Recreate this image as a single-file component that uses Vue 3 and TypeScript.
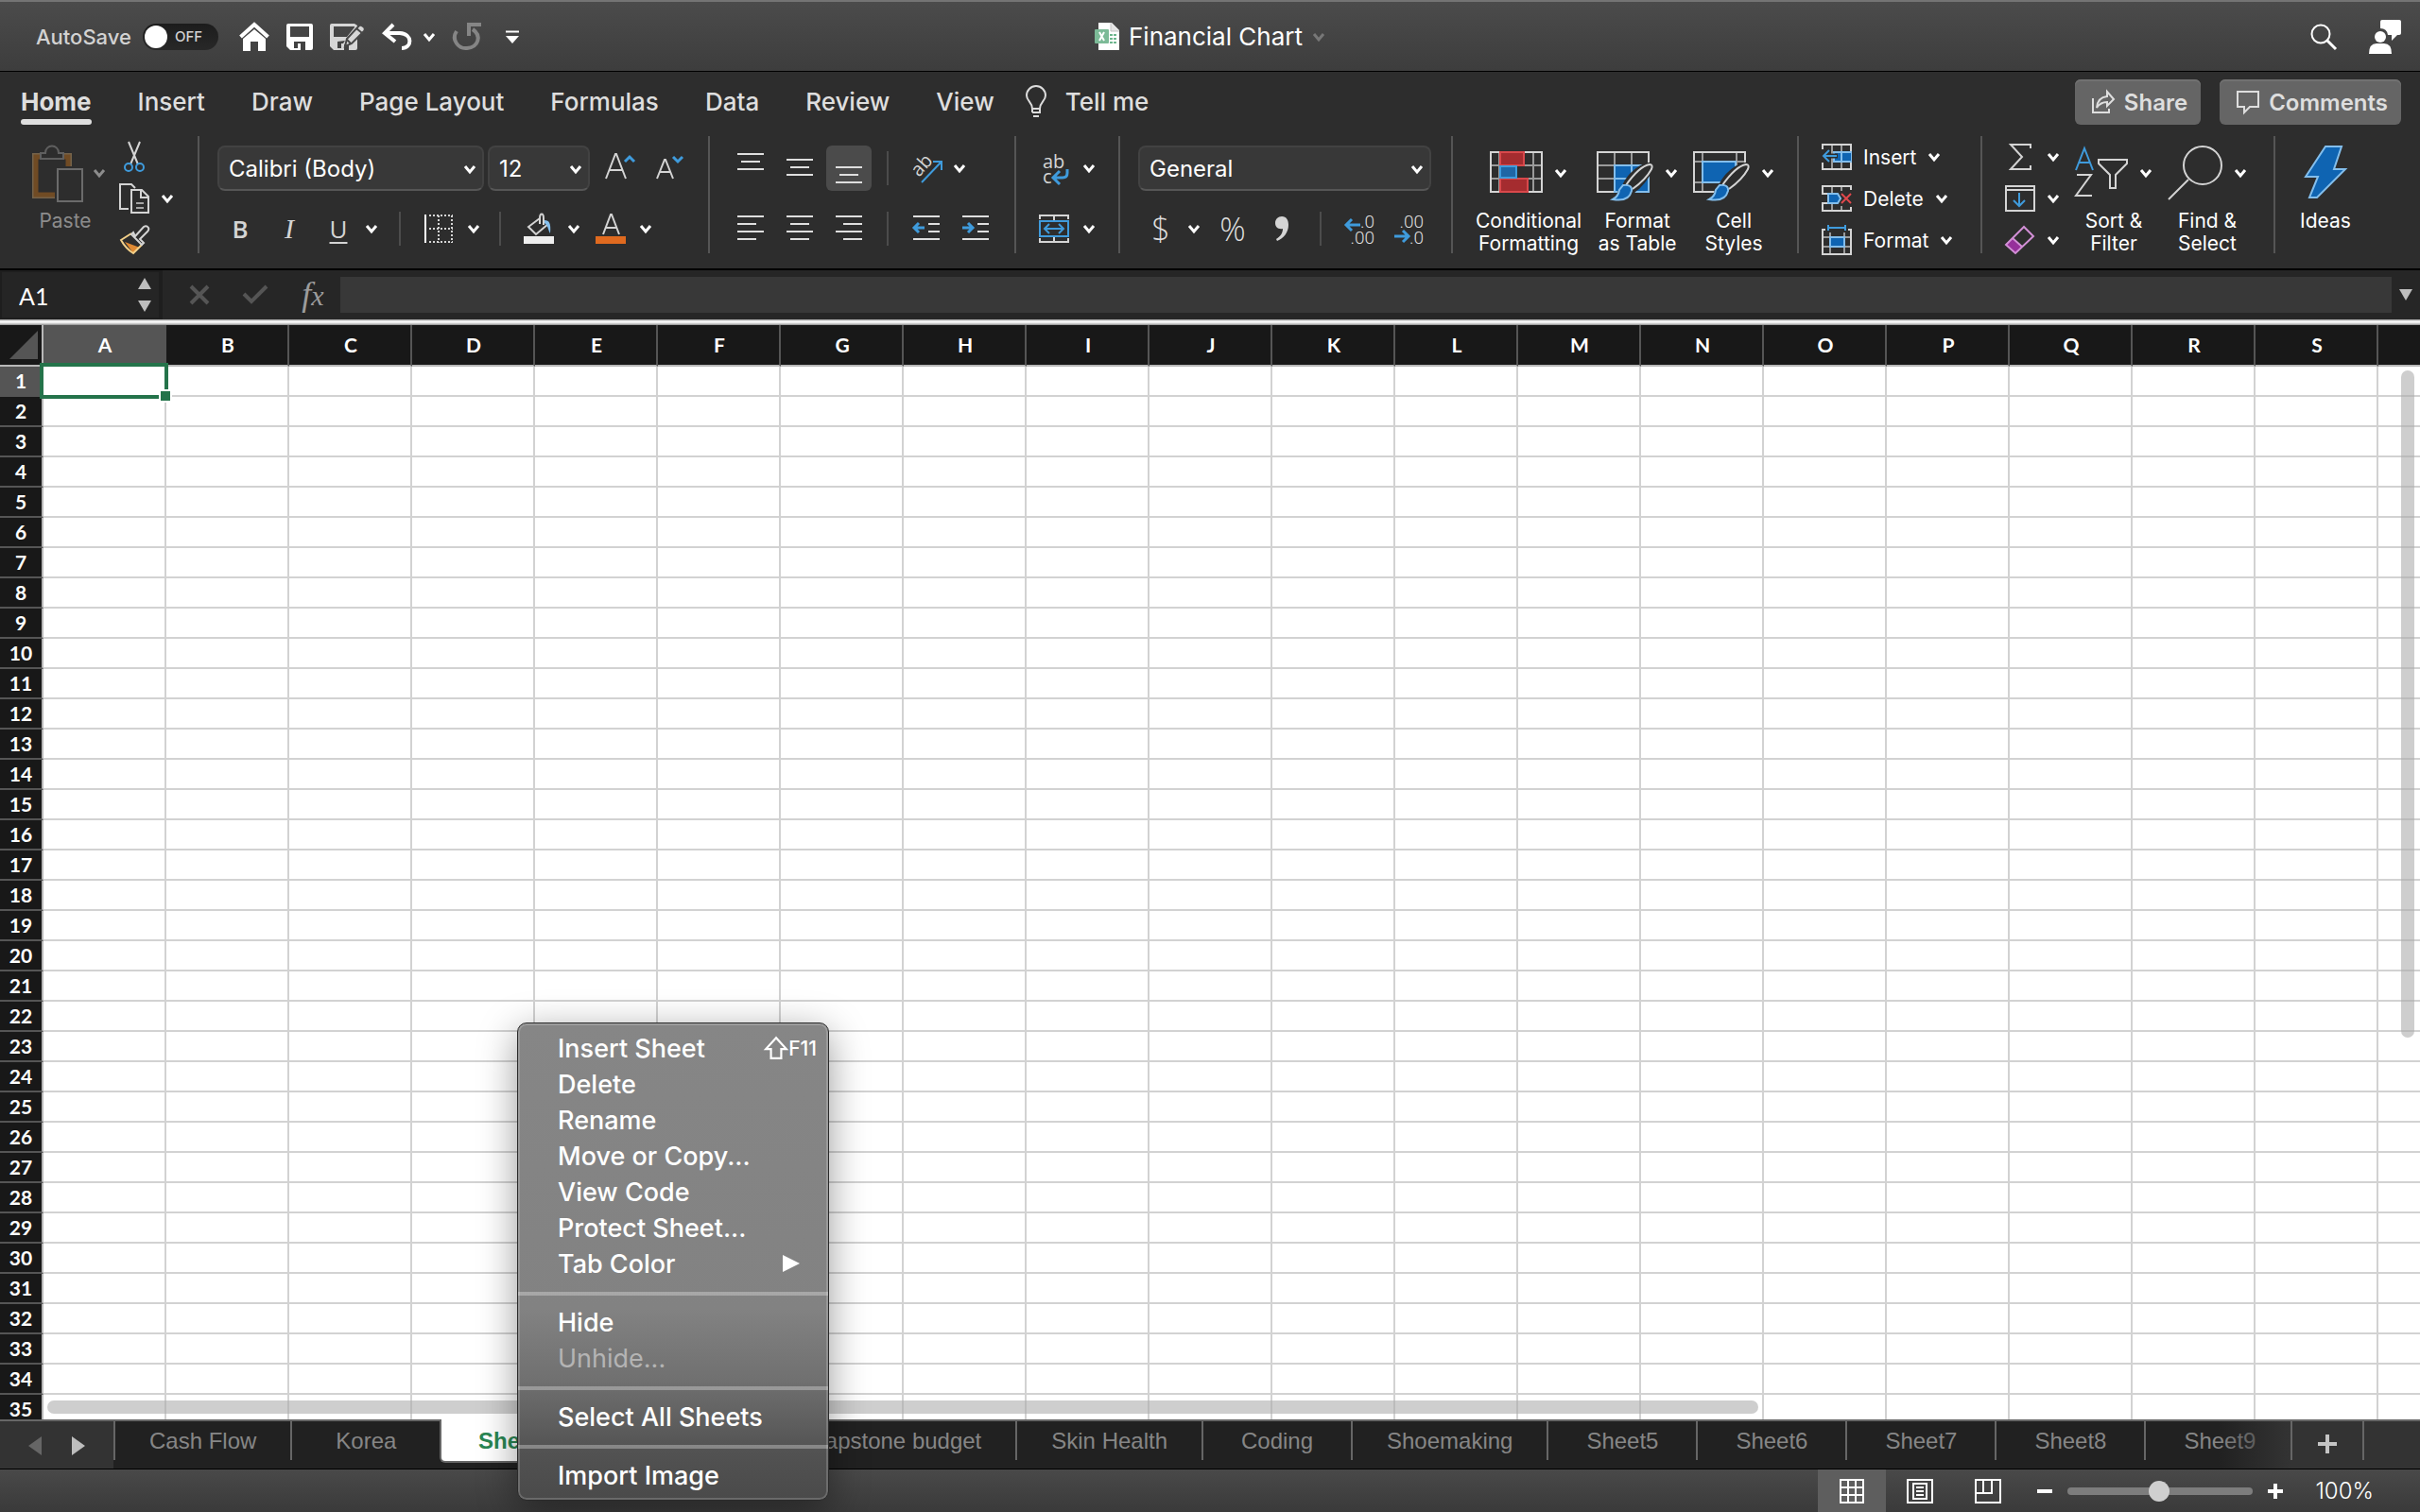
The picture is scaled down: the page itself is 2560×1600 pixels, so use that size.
<script setup lang="ts">
import { h, ref } from 'vue'

interface SheetTab {
  name: string
  active?: boolean
}

interface MenuEntry {
  label: string
  shortcut?: string
  submenu?: boolean
  disabled?: boolean
}

const ribbonTabs: string[] = ['Home', 'Insert', 'Draw', 'Page Layout', 'Formulas', 'Data', 'Review', 'View']
const activeRibbonTab = ref('Home')

const columns: string[] = Array.from({ length: 20 }, (_, i) => String.fromCharCode(65 + i))
const rowCount = 35

const sheets: SheetTab[] = [
  { name: 'Cash Flow' },
  { name: 'Korea' },
  { name: 'Sheet3', active: true },
  { name: 'Shoe totals' },
  { name: 'Capstone budget' },
  { name: 'Skin Health' },
  { name: 'Coding' },
  { name: 'Shoemaking' },
  { name: 'Sheet5' },
  { name: 'Sheet6' },
  { name: 'Sheet7' },
  { name: 'Sheet8' },
  { name: 'Sheet9' },
]

const menuSections: MenuEntry[][] = [
  [
    { label: 'Insert Sheet', shortcut: 'F11' },
    { label: 'Delete' },
    { label: 'Rename' },
    { label: 'Move or Copy...' },
    { label: 'View Code' },
    { label: 'Protect Sheet...' },
    { label: 'Tab Color', submenu: true },
  ],
  [{ label: 'Hide' }, { label: 'Unhide...', disabled: true }],
  [{ label: 'Select All Sheets' }],
  [{ label: 'Import Image' }],
]

const cellName = ref('A1')
const formula = ref('')
const zoomLevel = ref(100)

const Chevron = () =>
  h('svg', { class: 'chevron', width: 14, height: 10, viewBox: '0 0 14 10', 'aria-hidden': 'true' }, [
    h('path', { d: 'M2 2 L7 8 L12 2', fill: 'none', stroke: 'currentColor', 'stroke-width': 3 }),
  ])
</script>

<template>
  <div class="app">
    <header class="titlebar">
      <div class="quick">
        <label class="autosave">
          <span>AutoSave</span>
          <input type="checkbox" class="sr" />
          <span class="switch"><i></i><b>OFF</b></span>
        </label>
        <button type="button" class="q home" aria-label="Home">
          <svg width="32" height="30" viewBox="0 0 32 30">
            <path d="M1.500 15 L16 2 L30.500 15" fill="none" stroke="#fff" stroke-width="4" />
            <path d="M4 17 L16 7 L28 17 V30 H20 V20 H12 V30 H4 Z" fill="#fff" />
          </svg>
        </button>
        <button type="button" class="q" aria-label="Save">
          <svg width="28" height="28" viewBox="0 0 28 28">
            <path fill-rule="evenodd" d="M2 0 H26 Q28 0 28 2 V26 Q28 28 26 28 H20 V21 H15 V28 H4 L0 24 V2 Q0 0 2 0 Z M4 3 V14 H24 V3 Z M8 19 V26 H12 V21 H20 V19 Z" fill="#fff" />
          </svg>
        </button>
        <button type="button" class="q" aria-label="Save and edit">
          <svg width="38" height="28" viewBox="0 0 38 28">
            <path fill-rule="evenodd" d="M2 0 H26 L29 2 V26 Q29 28 27 28 H20 V22 H15 V28 H4 L0 24 V2 Q0 0 2 0 Z M4 3 V14 H18 L26 4 V3 Z M8 19 V26 H12 V21 H14 L16 18 Z" fill="#d6d6d6" />
            <path d="M16 24 L18 16 L31 2 Q33 1 35 3 Q38 5 36 8 L23 21 Z" fill="#d6d6d6" stroke="#474747" stroke-width="2" />
            <path d="M28 5 L34 10 M18 17 L22 21" stroke="#474747" stroke-width="2" />
          </svg>
        </button>
        <button type="button" class="q undo" aria-label="Undo">
          <svg width="30" height="28" viewBox="0 0 30 28">
            <path d="M11 1 L2 10 L13 19 M3 10 H18 C32 11 31 26 20 26" fill="none" stroke="#fff" stroke-width="4" />
          </svg>
          <Chevron />
        </button>
        <button type="button" class="q" aria-label="Redo">
          <svg width="30" height="30" viewBox="0 0 30 30">
            <path d="M4 9 C-2 18 6 28 15 27 C27 26 31 14 21 7 M17 14 V2 H30" fill="none" stroke="#858585" stroke-width="4" />
          </svg>
        </button>
        <button type="button" class="q more" aria-label="Customize toolbar">
          <svg width="14" height="14" viewBox="0 0 14 14">
            <path d="M0 1.500 H14" stroke="#fff" stroke-width="2" />
            <path d="M0 6 H14 L7 14 Z" fill="#fff" />
          </svg>
        </button>
      </div>
      <h1 class="doc">
        <svg width="26" height="30" viewBox="0 0 26 30">
          <path d="M4 0 H18 L26 8 V29 H4 Z" fill="#fff" />
          <path d="M17 0 L17 9 H26" fill="#e4e4e4" stroke="#c4c4c4" />
          <path d="M16 13 H23 M16 17 H23 M16 21 H23" stroke="#6db68d" stroke-width="2" stroke-dasharray="3 1" />
          <rect x="0" y="7" width="15" height="15" rx="1" fill="#7cba97" />
          <path d="M5 10 L10 19 M10 10 L5 19" stroke="#fff" stroke-width="2" />
        </svg>
        <span>Financial Chart</span>
        <Chevron />
      </h1>
      <div class="account">
        <button type="button" class="q" aria-label="Search">
          <svg width="28" height="28" viewBox="0 0 28 28">
            <circle cx="11" cy="11" r="9.500" fill="none" stroke="#fff" stroke-width="2" />
            <path d="M17 17 L27 27" stroke="#fff" stroke-width="3" />
          </svg>
        </button>
        <button type="button" class="q" aria-label="Account and feedback">
          <svg width="34" height="36" viewBox="0 0 34 36">
            <path d="M14 0 H32 Q34 0 34 2 V14 Q34 16 32 16 H30 L24 22 V16 H20 Q19 9 12 9 V2 Q12 0 14 0 Z" fill="#fff" />
            <circle cx="12" cy="18" r="6" fill="#fff" />
            <path d="M0 36 Q0 25 8 25 H16 Q24 25 24 36 Z" fill="#fff" />
          </svg>
        </button>
      </div>
    </header>

    <section class="ribbon">
      <nav class="tabs">
        <button
          v-for="t in ribbonTabs"
          :key="t"
          type="button"
          class="tab"
          :class="{ on: t === activeRibbonTab }"
          @click="activeRibbonTab = t"
        >{{ t }}</button>
        <button type="button" class="tab tell">
          <svg width="22" height="34" viewBox="0 0 22 34">
            <path d="M7 25 C7 18 1 17 1 11 A10 10 0 0 1 21 11 C21 17 15 18 15 25 Z M7 29 H15 V25 M7 25 V29" fill="none" stroke="#dcdcdc" stroke-width="2" />
            <path d="M8 33 H14" stroke="#dcdcdc" stroke-width="2" />
          </svg>
          Tell me
        </button>
        <div class="collab">
          <button type="button">
            <svg width="24" height="24" viewBox="0 0 24 24">
              <path d="M1 8 V23 H18 V19" fill="none" stroke="#dedede" stroke-width="2" />
              <path d="M5 18 Q6 7 16 6 V1 L23 9 L16 16 V12 Q9 12 5 18 Z" fill="none" stroke="#dedede" stroke-width="2" />
            </svg>
            Share
          </button>
          <button type="button">
            <svg width="24" height="24" viewBox="0 0 24 24">
              <path d="M1 1 H23 V17 H14 L8 23 V17 H1 Z" fill="none" stroke="#dedede" stroke-width="2" />
            </svg>
            Comments
          </button>
        </div>
      </nav>

      <div class="groups">
        <div class="group clipboard">
          <button type="button" class="big faded">
            <span class="pic">
              <svg width="54" height="60" viewBox="0 0 54 60">
                <path d="M8 9 H1 V55 H24 M34 9 H41 V22" fill="none" stroke="#75634a" stroke-width="2" />
                <path d="M9 12 H4 V52 H24 M34 12 H38 V22" fill="none" stroke="#704b24" stroke-width="5" />
                <path d="M9 14 V8 H14 C14 -2 28 -2 28 8 H33 V14 Z" fill="none" stroke="#5f5f5f" stroke-width="2" />
                <path d="M27 25 H53 V59 H27 Z" fill="#2d2d2d" stroke="#6b6b6b" stroke-width="2" />
              </svg>
              <Chevron />
            </span>
            <span class="cap">Paste</span>
          </button>
          <div class="stack">
            <button type="button" class="line" aria-label="Cut">
              <svg width="32" height="32" viewBox="0 0 32 32">
                <path d="M10 0 L20 24 M22 0 L12 24" stroke="#d4d4d4" stroke-width="2" />
                <circle cx="10" cy="27" r="4" fill="none" stroke="#3f9bdc" stroke-width="2" />
                <circle cx="22" cy="27" r="4" fill="none" stroke="#3f9bdc" stroke-width="2" />
              </svg>
            </button>
            <button type="button" class="line" aria-label="Copy">
              <svg width="32" height="32" viewBox="0 0 32 32">
                <path d="M10 27 H1 V1 H13 L17 5" fill="none" stroke="#d4d4d4" stroke-width="2" />
                <path d="M13 7 H24 L31 14 V31 H13 Z M23 7 V15 H31" fill="none" stroke="#d4d4d4" stroke-width="2" />
                <path d="M18 21 H26 M18 26 H26" stroke="#a5a5a5" stroke-width="2" />
              </svg>
              <Chevron />
            </button>
            <button type="button" class="line" aria-label="Format painter">
              <svg width="32" height="32" viewBox="0 0 32 32">
                <path d="M6 18 L22 24 L15 30 Z" fill="#e08a33" />
                <path d="M13 9 L2 16 Q7 25 15 30 L24 21" fill="none" stroke="#f3d089" stroke-width="2" />
                <path d="M17 12 L26 2 Q29 0 31 3 Q32 5 30 7 L22 15 L26 19 L24 21 L13 10 L15 8 Z" fill="none" stroke="#d4d4d4" stroke-width="2" />
              </svg>
            </button>
          </div>
        </div>

        <div class="group rows">
          <div class="row">
            <label class="pick font">
              <select aria-label="Font"><option>Calibri (Body)</option></select>
              <Chevron />
            </label>
            <label class="pick size">
              <select aria-label="Font size"><option>12</option></select>
              <Chevron />
            </label>
            <button type="button" class="ico grow" aria-label="Increase font size">
              <svg width="32" height="32" viewBox="0 0 32 32">
                <path d="M1 27 L11 1 H12 L22 27 M5 18 H18" fill="none" stroke="#d4d4d4" stroke-width="2" />
                <path d="M21 9 L26 4 L31 9" fill="none" stroke="#3f9bdc" stroke-width="3" />
              </svg>
            </button>
            <button type="button" class="ico" aria-label="Decrease font size">
              <svg width="32" height="32" viewBox="0 0 32 32">
                <path d="M3 27 L11 7 H12 L20 27 M6 20 H17" fill="none" stroke="#d4d4d4" stroke-width="2" />
                <path d="M20 4 L25 9 L30 4" fill="none" stroke="#3f9bdc" stroke-width="3" />
              </svg>
            </button>
          </div>
          <div class="row">
            <button type="button" class="ico letter"><b>B</b></button>
            <button type="button" class="ico letter"><i>I</i></button>
            <button type="button" class="ico letter"><u>U</u></button>
            <Chevron />
            <hr />
            <button type="button" class="pair" aria-label="Borders">
              <svg width="32" height="32" viewBox="0 0 32 32">
                <path d="M2 1 V31" stroke="#fff" stroke-width="2" />
                <path d="M6 2 H31 M6 16 H31 M6 30 H31 M16 2 V31 M30 2 V31" stroke="#d4d4d4" stroke-width="2" stroke-dasharray="2 2" />
              </svg>
              <Chevron />
            </button>
            <hr />
            <button type="button" class="pair" aria-label="Fill color">
              <svg width="32" height="32" viewBox="0 0 32 32">
                <path d="M17 5 L5 14 L13 22 L26 11 M17 11 V5 C17 -1 21 -1 21 5 V12" fill="none" stroke="#d4d4d4" stroke-width="2" />
                <path d="M22 7 C27 7 29 10 28 21 C26 18 26 13 22 10 Z" fill="#83beec" />
                <rect x="0" y="24" width="32" height="8" fill="#eee" />
              </svg>
              <Chevron />
            </button>
            <button type="button" class="pair color" aria-label="Font color">
              <svg width="32" height="32" viewBox="0 0 32 32">
                <path d="M8 22 L16 1 H17 L25 22 M11 15 H22" fill="none" stroke="#d4d4d4" stroke-width="2" />
                <rect x="0" y="24" width="32" height="8" fill="#e06a1f" />
              </svg>
              <Chevron />
            </button>
          </div>
        </div>

        <div class="group rows align">
          <div class="row">
            <button type="button" class="ico" aria-label="Align top">
              <svg width="28" height="34" viewBox="0 0 28 34"><path d="M0 2 H28 M4 10 H24 M0 18 H28" stroke="#dedede" stroke-width="2" /></svg>
            </button>
            <button type="button" class="ico" aria-label="Align middle">
              <svg width="28" height="34" viewBox="0 0 28 34"><path d="M0 8 H28 M4 16 H24 M0 24 H28" stroke="#dedede" stroke-width="2" /></svg>
            </button>
            <button type="button" class="ico pressed" aria-label="Align bottom">
              <svg width="28" height="34" viewBox="0 0 28 34"><path d="M0 16 H28 M4 24 H24 M0 32 H28" stroke="#dedede" stroke-width="2" /></svg>
            </button>
            <hr />
            <button type="button" class="ico" aria-label="Orientation">
              <svg width="34" height="32" viewBox="0 0 34 32">
                <text x="0" y="0" transform="translate(9 26) rotate(-48)" class="ab">ab</text>
                <path d="M12 31 L32 10 M24 9 H33 V18" fill="none" stroke="#3f9bdc" stroke-width="2" />
              </svg>
            </button>
            <Chevron />
          </div>
          <div class="row">
            <button type="button" class="ico" aria-label="Align left">
              <svg width="28" height="28" viewBox="0 0 28 28"><path d="M0 1 H28 M0 9 H20 M0 17 H28 M0 25 H20" stroke="#dedede" stroke-width="2" /></svg>
            </button>
            <button type="button" class="ico" aria-label="Align center">
              <svg width="28" height="28" viewBox="0 0 28 28"><path d="M0 1 H28 M4 9 H24 M0 17 H28 M4 25 H24" stroke="#dedede" stroke-width="2" /></svg>
            </button>
            <button type="button" class="ico" aria-label="Align right">
              <svg width="28" height="28" viewBox="0 0 28 28"><path d="M0 1 H28 M8 9 H28 M0 17 H28 M8 25 H28" stroke="#dedede" stroke-width="2" /></svg>
            </button>
            <hr />
            <button type="button" class="ico" aria-label="Decrease indent">
              <svg width="28" height="28" viewBox="0 0 28 28">
                <path d="M0 1 H28 M16 9 H28 M16 17 H28 M0 25 H28" stroke="#dedede" stroke-width="2" />
                <path d="M12 13 H1 M6 8 L1 13 L6 18" fill="none" stroke="#3f9bdc" stroke-width="3" />
              </svg>
            </button>
            <button type="button" class="ico" aria-label="Increase indent">
              <svg width="28" height="28" viewBox="0 0 28 28">
                <path d="M0 1 H28 M16 9 H28 M16 17 H28 M0 25 H28" stroke="#dedede" stroke-width="2" />
                <path d="M0 13 H11 M6 8 L11 13 L6 18" fill="none" stroke="#3f9bdc" stroke-width="3" />
              </svg>
            </button>
          </div>
        </div>

        <div class="group rows wrap">
          <div class="row">
            <button type="button" class="pair" aria-label="Wrap text">
              <svg width="32" height="34" viewBox="0 0 32 34">
                <text x="4" y="17" class="ab">ab</text>
                <text x="4" y="33" class="ab">c</text>
                <path d="M30 18 V22 Q30 27 25 27 H16 M22 20 L15 27 L22 34" fill="none" stroke="#3f9bdc" stroke-width="3" />
              </svg>
              <Chevron />
            </button>
          </div>
          <div class="row">
            <button type="button" class="pair" aria-label="Merge cells">
              <svg width="32" height="32" viewBox="0 0 32 32">
                <path d="M1 6 V2 H31 V6 M1 26 V30 H31 V26 M16 2 V8 M16 24 V30" fill="none" stroke="#d4d4d4" stroke-width="2" />
                <path d="M1 8 H31 V24 H1 Z M6 16 H26 M11 11 L6 16 L11 21 M21 11 L26 16 L21 21" fill="none" stroke="#3f9bdc" stroke-width="2" />
              </svg>
              <Chevron />
            </button>
          </div>
        </div>

        <div class="group rows number">
          <div class="row">
            <label class="pick general">
              <select aria-label="Number format"><option>General</option></select>
              <Chevron />
            </label>
          </div>
          <div class="row">
            <button type="button" class="ico sym">$</button>
            <Chevron />
            <button type="button" class="ico sym percent">%</button>
            <button type="button" class="ico" aria-label="Comma style">
              <svg width="14" height="26" viewBox="0 0 14 26">
                <path d="M7 0 C12 0 14 4 14 9 C14 17 9 23 2 26 L1 24 C6 21 8 17 8 13 C3 14 0 11 0 7 C0 3 3 0 7 0 Z" fill="#d4d4d4" />
              </svg>
            </button>
            <hr />
            <button type="button" class="ico" aria-label="Increase decimal">
              <svg width="32" height="32" viewBox="0 0 32 32">
                <path d="M17 12 H2 M8 6 L2 12 L8 18" fill="none" stroke="#3f9bdc" stroke-width="3" />
                <text x="32" y="15" class="dec">.0</text>
                <text x="32" y="32" class="dec">.00</text>
              </svg>
            </button>
            <button type="button" class="ico" aria-label="Decrease decimal">
              <svg width="32" height="32" viewBox="0 0 32 32">
                <text x="32" y="15" class="dec">.00</text>
                <text x="32" y="32" class="dec">.0</text>
                <path d="M1 24 H16 M10 18 L16 24 L10 30" fill="none" stroke="#3f9bdc" stroke-width="3" />
              </svg>
            </button>
          </div>
        </div>

        <div class="group styles">
          <button type="button" class="big">
            <span class="pic">
              <svg width="56" height="60" viewBox="0 0 56 60">
                <path d="M10 7 V49 M46 7 V49 M1 21 H55 M1 35 H55" stroke="#9a9a9a" stroke-width="2" />
                <path d="M1 7 H55 V49 H1 Z" fill="none" stroke="#d4d4d4" stroke-width="2" />
                <path d="M11 7 H36 V21 H11 Z M11 35 H40 V49 H11 Z" fill="#a52c2f" stroke="#d9484b" stroke-width="2" />
                <path d="M11 22 H28 V34 H11 Z" fill="#1f66a5" stroke="#3f9bdc" stroke-width="2" />
              </svg>
              <Chevron />
            </span>
            <span class="cap">Conditional<br />Formatting</span>
          </button>
          <button type="button" class="big">
            <span class="pic">
              <svg width="60" height="60" viewBox="0 0 60 60">
                <path d="M19 7 V49 M37 7 V49 M1 21 H55 M1 35 H55" stroke="#9a9a9a" stroke-width="2" />
                <path d="M1 7 H55 V49 H1 Z" fill="none" stroke="#d4d4d4" stroke-width="2" />
                <path d="M19 21 H55 V49 H19 Z M37 21 V49 M19 35 H55" fill="#0f64b2" stroke="#83beec" stroke-width="2" />
                <path d="M27 43 C31 31 45 19 55 18 Q62 16 59 26 C55 36 47 45 41 49 L36 57 Q28 62 14 57 Q22 53 23 47 Z" fill="#2d2d2d" />
                <path d="M31 42 Q45 22 56 20 Q60 20 58 25 Q52 36 38 46" fill="none" stroke="#d4d4d4" stroke-width="2" />
                <path d="M28 42 Q38 41 37 48 Q34 60 17 57 Q23 54 24 47 Z" fill="#0f64b2" stroke="#83beec" stroke-width="2" />
              </svg>
              <Chevron />
            </span>
            <span class="cap">Format<br />as Table</span>
          </button>
          <button type="button" class="big">
            <span class="pic">
              <svg width="60" height="60" viewBox="0 0 60 60">
                <path d="M10 7 V49 M46 7 V49 M1 17 H55 M1 39 H55" stroke="#9a9a9a" stroke-width="2" />
                <path d="M1 7 H55 V49 H1 Z" fill="none" stroke="#d4d4d4" stroke-width="2" />
                <path d="M10 17 H45 V39 H10 Z" fill="#0f64b2" stroke="#83beec" stroke-width="2" />
                <path d="M27 43 C31 31 45 19 55 18 Q62 16 59 26 C58 42 56 48 56 51 H40 L36 57 Q28 62 14 57 Q22 53 23 47 Z" fill="#2d2d2d" />
                <path d="M31 42 Q45 22 56 20 Q60 20 58 25 Q52 36 38 46" fill="none" stroke="#d4d4d4" stroke-width="2" />
                <path d="M28 42 Q38 41 37 48 Q34 60 17 57 Q23 54 24 47 Z" fill="#0f64b2" stroke="#83beec" stroke-width="2" />
              </svg>
              <Chevron />
            </span>
            <span class="cap">Cell<br />Styles</span>
          </button>
        </div>

        <div class="group cells">
          <div class="stack">
            <button type="button" class="line text">
              <svg width="32" height="28" viewBox="0 0 32 28">
                <path d="M11 1 V27 M21 1 V27" stroke="#9a9a9a" stroke-width="2" />
                <path d="M1 6 V1 H31 V27 H1 V20" fill="none" stroke="#d4d4d4" stroke-width="2" />
                <rect x="12" y="8" width="20" height="12" fill="#83beec" />
                <path d="M14 10 H20 V18 H14 Z M22 10 H31 V18 H22 Z" fill="#0f64b2" />
                <path d="M17 13 H2 M8 7 L2 13 L8 19" fill="none" stroke="#2d2d2d" stroke-width="5" />
                <path d="M16 13 H2 M8 7 L2 13 L8 19" fill="none" stroke="#3f9bdc" stroke-width="2" />
              </svg>
              Insert <Chevron />
            </button>
            <button type="button" class="line text">
              <svg width="32" height="28" viewBox="0 0 32 28">
                <path d="M11 1 V8 M11 20 V27 M21 1 V6 M21 22 V27" stroke="#9a9a9a" stroke-width="2" />
                <path d="M7 9 H1 V1 H31 V5 M7 19 H1 V27 H31 V23" fill="none" stroke="#d4d4d4" stroke-width="2" />
                <path d="M7 9 H17 L20 14 L17 19 H7 Z" fill="#0f64b2" stroke="#83beec" stroke-width="2" />
                <path d="M21 9 L31 19 M31 9 L21 19" stroke="#e0484c" stroke-width="2" />
              </svg>
              Delete <Chevron />
            </button>
            <button type="button" class="line text">
              <svg width="32" height="32" viewBox="0 0 32 32">
                <path d="M9 8 V31 M24 8 V31 M1 13 H31 M1 23 H31" stroke="#9a9a9a" stroke-width="2" />
                <path d="M4 5 H1 V31 H31 V5 H28" fill="none" stroke="#d4d4d4" stroke-width="2" />
                <path d="M9 13 H24 V23 H9 Z" fill="#0f64b2" stroke="#83beec" stroke-width="2" />
                <path d="M7 3 H25 M7 0 V6 M25 0 V6" stroke="#3f9bdc" stroke-width="2" />
              </svg>
              Format <Chevron />
            </button>
          </div>
        </div>

        <div class="group editing">
          <div class="stack">
            <button type="button" class="line" aria-label="AutoSum">
              <svg width="32" height="28" viewBox="0 0 32 28">
                <path d="M27 5 V1 H6 L18 14 L6 27 H27 V23" fill="none" stroke="#d4d4d4" stroke-width="2" />
              </svg>
              <Chevron />
            </button>
            <button type="button" class="line" aria-label="Fill">
              <svg width="32" height="28" viewBox="0 0 32 28">
                <path d="M1 1 H31 V27 H1 Z M1 5 H31" fill="none" stroke="#d4d4d4" stroke-width="2" />
                <path d="M15 8 V22 M9 16 L15 22 L21 16" fill="none" stroke="#3f9bdc" stroke-width="2" />
              </svg>
              <Chevron />
            </button>
            <button type="button" class="line" aria-label="Clear">
              <svg width="32" height="32" viewBox="0 0 32 32">
                <path d="M8 14 L1 21 L11 30 L18 23 Z" fill="#96309b" />
                <path d="M20 2 L1 21 L11 30 L30 12 Z M8 14 L18 23" fill="none" stroke="#d28fd6" stroke-width="2" />
              </svg>
              <Chevron />
            </button>
          </div>
          <button type="button" class="big">
            <span class="pic">
              <svg width="56" height="60" viewBox="0 0 56 60">
                <path d="M1 26 L10 3 L19 26 M4 18 H16" fill="none" stroke="#3f9bdc" stroke-width="2" />
                <path d="M2 31 H17 L1 53 H18" fill="none" stroke="#d4d4d4" stroke-width="2" />
                <path d="M25 15 H55 V19 L43 31 V45 H37 V31 L25 19 Z" fill="none" stroke="#d4d4d4" stroke-width="2" />
              </svg>
              <Chevron />
            </span>
            <span class="cap">Sort &amp;<br />Filter</span>
          </button>
          <button type="button" class="big">
            <span class="pic">
              <svg width="58" height="60" viewBox="0 0 58 60">
                <circle cx="37" cy="21" r="20" fill="none" stroke="#d4d4d4" stroke-width="2" />
                <path d="M22 36 L1 57" stroke="#d4d4d4" stroke-width="2" />
              </svg>
              <Chevron />
            </span>
            <span class="cap">Find &amp;<br />Select</span>
          </button>
        </div>

        <div class="group ideas">
          <button type="button" class="big">
            <span class="pic">
              <svg width="44" height="60" viewBox="0 0 44 60">
                <path d="M22 1 H39 L31 25 H43 L13 55 H5 L14 33 H1 Z" fill="#0f64b2" stroke="#83beec" stroke-width="2" />
              </svg>
            </span>
            <span class="cap">Ideas</span>
          </button>
        </div>
      </div>
    </section>

    <div class="formula">
      <div class="namebox">
        <input v-model="cellName" aria-label="Name box" />
        <svg width="14" height="36" viewBox="0 0 14 36">
          <path d="M0 12 L7 0 L14 12 Z M0 24 H14 L7 36 Z" fill="#bdbdbd" />
        </svg>
      </div>
      <button type="button" class="fbtn" aria-label="Cancel">
        <svg width="22" height="22" viewBox="0 0 22 22"><path d="M2 2 L20 20 M20 2 L2 20" stroke="#555" stroke-width="4" /></svg>
      </button>
      <button type="button" class="fbtn enter" aria-label="Enter">
        <svg width="28" height="22" viewBox="0 0 28 22"><path d="M2 10 L10 18 L26 2" fill="none" stroke="#555" stroke-width="4" /></svg>
      </button>
      <button type="button" class="fbtn fx"><i>f<small>x</small></i></button>
      <input v-model="formula" class="expr" aria-label="Formula" />
      <button type="button" class="expand" aria-label="Expand formula bar">
        <svg width="14" height="12" viewBox="0 0 14 12"><path d="M0 0 H14 L7 12 Z" fill="#bdbdbd" /></svg>
      </button>
    </div>
    <div class="divider"></div>

    <main class="grid">
      <table>
        <colgroup>
          <col class="rowcol" />
          <col v-for="c in columns" :key="c" class="datacol" />
        </colgroup>
        <thead>
          <tr>
            <th class="corner">
              <svg width="30" height="30" viewBox="0 0 30 30"><path d="M30 0 V30 H0 Z" fill="#555" /></svg>
            </th>
            <th v-for="c in columns" :key="c" scope="col" :class="{ sel: c === 'A' }">{{ c }}</th>
          </tr>
        </thead>
        <tbody>
          <tr v-for="r in rowCount" :key="r">
            <th scope="row" :class="{ sel: r === 1 }">{{ r }}</th>
            <td v-for="c in columns" :key="c">
              <span v-if="r === 1 && c === 'A'" class="cursor"></span>
            </td>
          </tr>
        </tbody>
      </table>
      <div class="bar vertical"></div>
      <div class="bar horizontal"></div>
    </main>

    <footer class="sheets">
      <div class="pager">
        <button type="button" aria-label="Previous sheets">
          <svg width="14" height="20" viewBox="0 0 14 20"><path d="M14 0 V20 L0 10 Z" fill="#666" /></svg>
        </button>
        <button type="button" aria-label="Next sheets">
          <svg width="14" height="20" viewBox="0 0 14 20"><path d="M0 0 V20 L14 10 Z" fill="#bdbdbd" /></svg>
        </button>
      </div>
      <div class="list">
        <button v-for="s in sheets" :key="s.name" type="button" :class="{ active: s.active }">{{ s.name }}</button>
      </div>
      <button type="button" class="add" aria-label="Add sheet">
        <svg width="20" height="20" viewBox="0 0 20 20"><path d="M0 10 H20 M10 0 V20" stroke="#c4c4c4" stroke-width="4" /></svg>
      </button>
      <div class="rest"></div>
    </footer>

    <footer class="status">
      <button type="button" class="view on" aria-label="Normal view">
        <svg width="26" height="26" viewBox="0 0 26 26">
          <path d="M1 1 H25 V25 H1 Z M9 1 V25 M17 1 V25 M1 9 H25 M1 17 H25" fill="none" stroke="#fff" stroke-width="2" />
        </svg>
      </button>
      <button type="button" class="view" aria-label="Page layout view">
        <svg width="28" height="26" viewBox="0 0 28 26">
          <path d="M1 1 H27 V25 H1 Z M7 5 H21 V21 H7 Z M10 9 H18 M10 13 H18 M10 17 H18" fill="none" stroke="#fff" stroke-width="2" />
        </svg>
      </button>
      <button type="button" class="view" aria-label="Page break view">
        <svg width="28" height="26" viewBox="0 0 28 26">
          <path d="M1 1 H27 V25 H1 Z M1 15 H18 V1 M9 1 V15" fill="none" stroke="#fff" stroke-width="2" />
        </svg>
      </button>
      <button type="button" class="step" aria-label="Zoom out">
        <svg width="16" height="16" viewBox="0 0 16 16"><path d="M0 8 H16" stroke="#fff" stroke-width="4" /></svg>
      </button>
      <input v-model="zoomLevel" type="range" min="0" max="204" aria-label="Zoom" />
      <button type="button" class="step" aria-label="Zoom in">
        <svg width="16" height="16" viewBox="0 0 16 16"><path d="M0 8 H16 M8 0 V16" stroke="#fff" stroke-width="4" /></svg>
      </button>
      <output>{{ zoomLevel }}%</output>
    </footer>

    <div class="menu" role="menu">
      <div v-for="(section, i) in menuSections" :key="i" class="section">
        <button v-for="m in section" :key="m.label" type="button" role="menuitem" :disabled="m.disabled">
          <span>{{ m.label }}</span>
          <span v-if="m.shortcut" class="short">
            <svg width="26" height="26" viewBox="0 0 24 24">
              <path d="M12 2 L2 13 H7 V22 H17 V13 H22 Z" fill="none" stroke="#fff" stroke-width="2" />
            </svg>{{ m.shortcut }}
          </span>
          <svg v-if="m.submenu" class="sub" width="18" height="18" viewBox="0 0 18 18"><path d="M0 0 L18 9 L0 18 Z" fill="#fff" /></svg>
        </button>
      </div>
    </div>
  </div>
</template>

<style>
body {
  margin: 0;
  background: #2d2d2d;
}
</style>

<style scoped>
.app {
  position: relative;
  display: flex;
  flex-direction: column;
  height: 100vh;
  overflow: hidden;
  font-family: Inter, "Liberation Sans", sans-serif;
  color: #dedede;
}
*,
*::before,
*::after {
  box-sizing: border-box;
}
button,
input,
select {
  margin: 0;
  padding: 0;
  border: 0;
  border-radius: 0;
  background: none;
  color: inherit;
  font: inherit;
  outline: none;
}
svg {
  display: block;
  flex: none;
  overflow: visible;
}
.sr {
  position: absolute;
  opacity: 0;
  pointer-events: none;
}

.titlebar {
  flex: none;
  display: grid;
  grid-template-columns: 1fr auto 1fr;
  align-items: center;
  height: 76px;
  border-top: 2px solid #747474;
  border-bottom: 1px solid #000;
  background: linear-gradient(#4b4b4b, #3d3d3d);
}
.quick {
  display: flex;
  align-items: center;
  gap: 18px;
  padding-left: 38px;
}
.q {
  display: flex;
  align-items: center;
}
.autosave {
  display: flex;
  align-items: center;
  gap: 12px;
  margin-right: 4px;
  font-size: 22px;
  font-weight: 500;
  color: #d2d2d2;
}
.switch {
  display: flex;
  align-items: center;
  width: 80px;
  height: 28px;
  border-radius: 14px;
  background: linear-gradient(#1c1c1c, #282828);
}
.switch i {
  width: 24px;
  height: 24px;
  margin: 0 8px 0 2px;
  border-radius: 12px;
  background: #fff;
}
.switch b {
  font-size: 15px;
  font-weight: 500;
  color: #d2d2d2;
}
.undo {
  gap: 12px;
  color: #fff;
}
.more {
  margin-left: 8px;
}
.doc {
  display: flex;
  align-items: center;
  gap: 10px;
  margin: 0;
  font-size: 26px;
  font-weight: 400;
  color: #fff;
}
.doc .chevron {
  color: #777;
}
.account {
  display: flex;
  align-items: center;
  justify-content: flex-end;
  gap: 34px;
  padding-right: 20px;
}

.ribbon {
  flex: none;
  border-bottom: 2px solid #000;
  background: #2d2d2d;
}
.tabs {
  display: flex;
  align-items: center;
  gap: 49px;
  height: 64px;
  padding: 0 20px 0 22px;
}
.tab {
  position: relative;
  height: 48px;
  padding-bottom: 2px;
  font-size: 26px;
  font-weight: 500;
  white-space: nowrap;
}
.tab.on {
  font-weight: 700;
}
.tab.on::after {
  content: "";
  position: absolute;
  left: 0;
  right: 0;
  bottom: 0;
  height: 6px;
  border-radius: 3px;
  background: #dedede;
}
.tell {
  display: flex;
  align-items: center;
  gap: 20px;
  margin-left: -16px;
}
.collab {
  display: flex;
  gap: 20px;
  margin-left: auto;
}
.collab button {
  display: flex;
  align-items: center;
  gap: 10px;
  height: 48px;
  padding: 0 14px 0 18px;
  border-radius: 6px;
  background: #656565;
  box-shadow: inset 0 2px 0 #717171;
  font-size: 24px;
  font-weight: 600;
}

.groups {
  display: flex;
  align-items: flex-start;
  height: 144px;
  padding-top: 4px;
}
.group {
  display: flex;
  flex: none;
  height: 124px;
  border-right: 2px solid #555;
}
.clipboard {
  width: 211px;
  padding-left: 34px;
  gap: 14px;
}
.clipboard .pic {
  gap: 10px;
}
.rows {
  flex-direction: column;
  gap: 16px;
  width: 540px;
  padding: 10px 0 2px 19px;
}
.align {
  width: 324px;
}
.wrap {
  width: 110px;
  padding-left: 16px;
}
.number {
  width: 352px;
}
.styles {
  width: 366px;
  padding-left: 24px;
  gap: 16px;
}
.cells {
  width: 194px;
  padding-left: 24px;
}
.editing {
  width: 310px;
  padding-left: 24px;
  gap: 16px;
}
.ideas {
  padding-left: 26px;
  border-right: 0;
}
.row {
  display: flex;
  align-items: center;
  gap: 4px;
  height: 48px;
}
.row hr {
  flex: none;
  width: 2px;
  height: 36px;
  margin: 0 12px;
  border: 0;
  background: #4c4c4c;
}
.row > .chevron + hr {
  margin-left: 18px;
}
.chevron {
  color: #fff;
}
.ico {
  display: flex;
  flex: none;
  align-items: center;
  justify-content: center;
  width: 48px;
  height: 48px;
}
.grow {
  margin-left: 4px;
}
.pressed {
  border-radius: 6px;
  background: #4b4b4b;
}
.pair {
  display: flex;
  align-items: center;
  gap: 14px;
  margin: 0 4px 0 8px;
}
.letter {
  font-family: "Open Sans", sans-serif;
  font-size: 26px;
  color: #d4d4d4;
}
.letter b {
  font-weight: 600;
}
.letter i {
  font-family: "Liberation Serif", serif;
  font-size: 30px;
}
.letter u {
  text-underline-offset: 4px;
  text-decoration-thickness: 2px;
}
.sym {
  font-family: "Open Sans", sans-serif;
  font-size: 34px;
  font-weight: 300;
}
.percent {
  margin-left: 6px;
}
.ab {
  font: 400 20px "Open Sans", sans-serif;
  fill: #d4d4d4;
}
.dec {
  font: 300 19px Roboto, sans-serif;
  text-anchor: end;
  fill: #dedede;
}
.pick {
  position: relative;
  display: block;
  flex: none;
  height: 48px;
}
.pick select {
  width: 100%;
  height: 48px;
  padding: 0 10px;
  appearance: none;
  border: 2px solid #424242;
  border-bottom-color: #565656;
  border-radius: 8px;
  background: #383838;
  color: #fff;
  font-size: 24px;
}
.pick .chevron {
  position: absolute;
  top: 20px;
  right: 8px;
  pointer-events: none;
}
.font {
  width: 282px;
}
.size {
  width: 108px;
}
.general {
  width: 310px;
}
.big {
  display: flex;
  flex-direction: column;
  align-items: center;
  gap: 8px;
  height: 126px;
  padding-top: 10px;
  color: #fff;
}
.pic {
  display: flex;
  align-items: center;
  gap: 12px;
}
.pic .chevron {
  margin-bottom: 2px;
}
.cap {
  height: 48px;
  font-size: 21px;
  line-height: 24px;
  text-align: center;
  white-space: nowrap;
}
.faded,
.faded .chevron {
  color: #8c8c8c;
}
.faded .cap {
  padding-right: 8px;
}
.stack {
  display: flex;
  flex-direction: column;
}
.line {
  display: flex;
  flex: none;
  align-items: center;
  gap: 12px;
  height: 44px;
  color: #fff;
  font-size: 21px;
}

.formula {
  flex: none;
  display: flex;
  align-items: center;
  height: 52px;
  background: #262626;
}
.divider {
  flex: none;
  height: 6px;
  background: linear-gradient(#9c9c9c, #fff 40%, #e0e0e0 65%, #8c8c8c);
}
.namebox {
  display: flex;
  align-items: center;
  width: 172px;
  height: 52px;
  padding-left: 18px;
  border: 2px solid #1e1e1e;
  border-right-width: 4px;
  background: #252525;
}
.namebox input {
  width: 126px;
  height: 40px;
  padding-top: 2px;
  font-family: Lato, sans-serif;
  font-size: 25px;
  color: #fff;
}
.fbtn {
  margin-left: 28px;
}
.enter {
  margin-left: 34px;
}
.fx {
  margin-left: 30px;
  width: 34px;
  height: 48px;
  font-family: "Liberation Serif", serif;
  font-size: 36px;
  line-height: 40px;
  color: #9c9c9c;
}
.fx small {
  font-size: 30px;
}
.expr {
  flex: 1;
  height: 38px;
  margin-left: 12px;
  background: #383838;
}
.expand {
  padding: 0 8px;
}

.grid {
  position: relative;
  flex: 1;
  min-height: 0;
  overflow: hidden;
  background: #fff;
}
table {
  width: 2646px;
  table-layout: fixed;
  border-collapse: separate;
  border-spacing: 0;
  font-family: Lato, "Open Sans", sans-serif;
  font-size: 21px;
  color: #fff;
}
.rowcol {
  width: 46px;
}
.datacol {
  width: 130px;
}
th,
td {
  padding: 0;
  line-height: 26px;
}
thead th {
  height: 44px;
  padding-left: 2px;
  border-right: 2px solid #555;
  border-bottom: 2px solid #b8b8b8;
  background: #181818;
  font-weight: 700;
}
thead .sel {
  background: #555;
}
thead .corner {
  padding: 0 0 0 10px;
  border-right-color: #b8b8b8;
}
tbody th {
  height: 32px;
  border-right: 2px solid #b8b8b8;
  border-bottom: 2px solid #555;
  background: #181818;
  font-weight: 700;
}
tbody .sel {
  background: #555;
}
td {
  position: relative;
  height: 32px;
  border-right: 2px solid #d2d2d2;
  border-bottom: 2px solid #d2d2d2;
}
.cursor {
  position: absolute;
  z-index: 1;
  top: -4px;
  left: -4px;
  right: -4px;
  bottom: -4px;
  border: 4px solid #24734a;
}
.cursor::after {
  content: "";
  position: absolute;
  right: -6px;
  bottom: -6px;
  width: 10px;
  height: 10px;
  background: #24734a;
  box-shadow: 0 0 0 2px #fff;
}
.bar {
  position: absolute;
  border-radius: 7px;
  background: rgba(170, 170, 170, 0.58);
}
.vertical {
  top: 48px;
  right: 6px;
  width: 14px;
  height: 61%;
}
.horizontal {
  left: 50px;
  bottom: 6px;
  width: calc(71% - 8px);
  height: 14px;
}

.sheets {
  flex: none;
  display: flex;
  height: 52px;
  border-top: 2px solid #666;
  background: #333;
}
.pager {
  display: flex;
  align-items: center;
  justify-content: flex-end;
  gap: 32px;
  width: 120px;
  padding: 2px 30px 0 0;
}
.list {
  position: relative;
  display: flex;
  flex: 1;
  min-width: 0;
  margin-top: -2px;
  padding-top: 2px;
  overflow: hidden;
  background: #212121;
  box-shadow: inset 0 2px 0 #666;
}
.list::after {
  content: "";
  position: absolute;
  top: 2px;
  right: 0;
  bottom: 0;
  width: 76px;
  background: linear-gradient(90deg, transparent, #333);
}
.list button {
  flex: none;
  min-width: 158px;
  height: 41px;
  padding: 0 36px;
  border-left: 2px solid #666;
  font-family: "Liberation Sans", sans-serif;
  font-size: 24px;
  color: #868686;
  white-space: nowrap;
}
.list .active {
  height: 46px;
  margin-top: -2px;
  padding-top: 2px;
  border-bottom: 2px solid #666;
  border-bottom-left-radius: 6px;
  background: #fff;
  font-weight: 700;
  color: #2a8653;
}
.add {
  display: flex;
  align-items: center;
  justify-content: center;
  width: 78px;
  height: 41px;
  padding-top: 6px;
  border: solid #666;
  border-width: 0 2px;
}
.rest {
  width: 59px;
}

.status {
  flex: none;
  display: flex;
  align-items: center;
  justify-content: flex-end;
  height: 46px;
  padding-right: 49px;
  border-top: 1px solid #000;
  background: linear-gradient(#494949, #3a3a3a);
}
.view {
  display: flex;
  align-items: center;
  justify-content: center;
  width: 72px;
  height: 45px;
}
.view.on {
  background: #5e5e5e;
}
.step {
  margin-left: 16px;
}
.status input {
  width: 196px;
  height: 8px;
  margin-left: 16px;
  appearance: none;
  border-radius: 4px;
  background: #7d7d7d;
}
.status input::-webkit-slider-thumb {
  width: 22px;
  height: 22px;
  appearance: none;
  border-radius: 11px;
  background: #cfcfcf;
}
.status output {
  margin-left: 34px;
  font-size: 24px;
  font-weight: 300;
  color: #fff;
}

.menu {
  position: absolute;
  left: 547px;
  bottom: 12px;
  width: 330px;
  padding: 7px 0;
  border: 1px solid #2a2a2a;
  border-radius: 10px;
  background: linear-gradient(#868686, #828282 60%, #707070 75%, #525252 90%, #4a4a4a);
  box-shadow: inset 0 0 0 2px rgba(255, 255, 255, 0.18), 0 10px 40px rgba(0, 0, 0, 0.4);
  color: #fff;
}
.section + .section {
  margin-top: 11px;
  padding-top: 9px;
  border-top: 4px solid rgba(255, 255, 255, 0.3);
}
.menu button {
  display: flex;
  align-items: center;
  justify-content: space-between;
  width: 100%;
  height: 38px;
  padding: 0 12px 0 42px;
  font-size: 27px;
  font-weight: 500;
  white-space: nowrap;
}
.menu button:disabled {
  color: #b4b4b4;
  font-weight: 400;
}
.short {
  display: flex;
  align-items: center;
  font-size: 21px;
}
.sub {
  margin-right: 18px;
}
</style>
